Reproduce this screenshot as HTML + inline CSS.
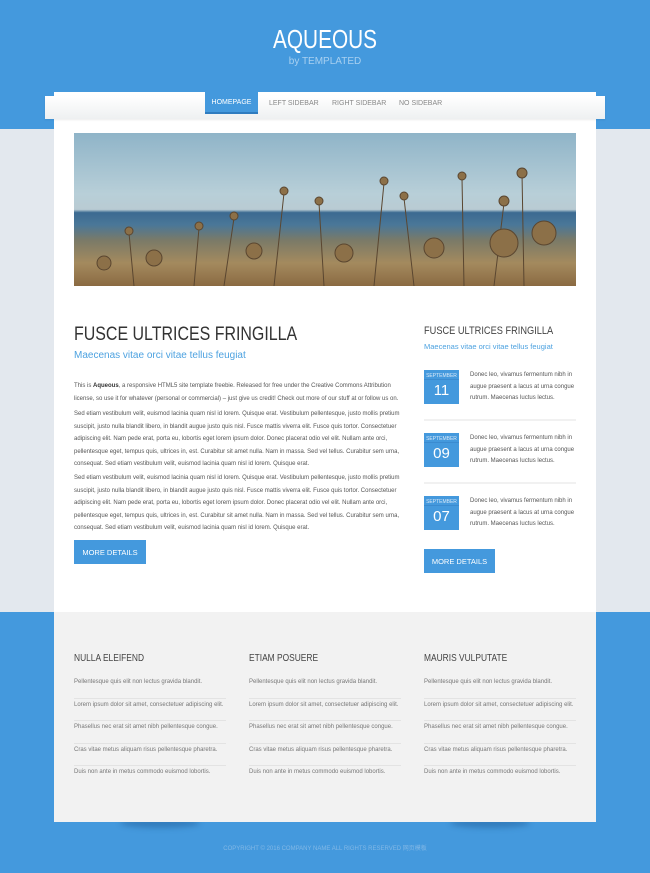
<!DOCTYPE html>
<html><head><style>
*{margin:0;padding:0;box-sizing:border-box}
body{width:650px;height:873px;background:#4499dd;font-family:"Liberation Sans",sans-serif;position:relative;overflow:hidden;color:#666}
.n{display:inline-block;transform:scaleX(.84);transform-origin:left center;white-space:nowrap}
.mid{position:absolute;left:0;top:129px;width:650px;height:483px;background:#e3e8ee}
.h1{position:absolute;top:24px;width:650px;text-align:center;color:#fff;font-size:26px}
.h1 span{display:inline-block;transform:scaleX(.8)}
.by{position:absolute;top:56px;width:650px;text-align:center;color:#a8d0f0;font-size:10px}
.box{position:absolute;left:54px;top:92px;width:542px;height:520px;background:#fff}
.nav{position:absolute;left:45px;top:96px;width:560px;height:23px;background:linear-gradient(#fff,#eef0f1);box-shadow:0 1px 2px rgba(0,0,0,.08)}
.nav a{position:absolute;top:4px;font-size:7px;color:#888}
.tab{position:absolute;left:205px;top:92px;width:53px;height:22px;background:#4499dd;border-bottom:2px solid #2f7cbf;color:#fff;font-size:7px;text-align:center;padding-top:7px}
.img{position:absolute;left:74px;top:133px;width:502px;height:153px;background:linear-gradient(#8fb4c8 0%,#b8cfd8 40%,#b9cbd3 50%,#3c6a91 52%,#4a7798 60%,#7a7a68 70%,#a48a5e 85%,#8a6a42 100%);overflow:hidden}
.t1{position:absolute;left:74px;top:324px;font-size:19px;color:#333}
.s1{position:absolute;left:74px;top:350px;font-size:10px;color:#4da2e0}
p.b{position:absolute;left:74px;width:330px;font-size:6px;line-height:12.5px;color:#555}
.btn{position:absolute;background:#4499dd;color:#fff;font-size:7.5px;text-align:center;padding-top:8px;height:24px;width:72px}
.t2{position:absolute;left:424px;top:325px;font-size:11px;color:#444}
.s2{position:absolute;left:424px;top:342px;font-size:7.5px;color:#4da2e0}
.date{position:absolute;left:424px;width:35px;height:34px;background:#4499dd;color:#fff;text-align:center}
.date .m{font-size:5px;padding-top:3px;color:#dbeaf8;border-bottom:1px solid #3b8bd0;height:10px}
.date .d{font-size:15px;padding-top:2px}
.dt{position:absolute;left:470px;width:110px;font-size:6px;line-height:11.5px;color:#555}
.sep{position:absolute;left:424px;width:152px;height:2px;background:#f1f1f1}
.foot{position:absolute;left:54px;top:612px;width:542px;height:210px;background:#f2f2f2}
.sh{position:absolute;top:818px;height:10px;border-radius:50%;background:rgba(0,40,90,.25);filter:blur(3px)}
.col{position:absolute;top:653px;width:152px}
.col h4{font-weight:normal;font-size:10px;color:#444;margin-bottom:12px}
.col div{font-size:6px;color:#777;height:22.5px;padding-top:3px;border-bottom:1px solid #e3e3e3}
.col div:last-child{border:none}
.copy{position:absolute;top:843px;width:650px;text-align:center;font-size:6px;color:#82b8e6}
</style></head><body>
<div class="mid"></div>
<div class="h1"><span>AQUEOUS</span></div>
<div class="by">by TEMPLATED</div>
<div class="box"></div>
<div class="nav"><a style="left:224px">LEFT SIDEBAR</a><a style="left:287px">RIGHT SIDEBAR</a><a style="left:354px">NO SIDEBAR</a></div>
<div class="tab">HOMEPAGE</div>
<div class="img">
<svg width="502" height="153" style="position:absolute;left:0;top:0">
<g stroke="#5a4630" stroke-width="1" fill="#8c7048">
<line x1="200" y1="153" x2="210" y2="60"/><circle cx="210" cy="58" r="4"/>
<line x1="250" y1="153" x2="245" y2="70"/><circle cx="245" cy="68" r="4"/>
<line x1="300" y1="153" x2="310" y2="50"/><circle cx="310" cy="48" r="4"/>
<line x1="340" y1="153" x2="330" y2="65"/><circle cx="330" cy="63" r="4"/>
<line x1="390" y1="153" x2="388" y2="45"/><circle cx="388" cy="43" r="4"/>
<line x1="420" y1="153" x2="430" y2="70"/><circle cx="430" cy="68" r="5"/>
<line x1="450" y1="153" x2="448" y2="40"/><circle cx="448" cy="40" r="5"/>
<line x1="150" y1="153" x2="160" y2="85"/><circle cx="160" cy="83" r="4"/>
<line x1="120" y1="153" x2="125" y2="95"/><circle cx="125" cy="93" r="4"/>
<line x1="60" y1="153" x2="55" y2="100"/><circle cx="55" cy="98" r="4"/>
<circle cx="430" cy="110" r="14"/><circle cx="470" cy="100" r="12"/><circle cx="360" cy="115" r="10"/><circle cx="270" cy="120" r="9"/><circle cx="80" cy="125" r="8"/><circle cx="180" cy="118" r="8"/><circle cx="30" cy="130" r="7"/>
</g></svg></div>
<div class="t1"><span class="n">FUSCE ULTRICES FRINGILLA</span></div>
<div class="s1">Maecenas vitae orci vitae tellus feugiat</div>
<p class="b" style="top:380px">This is <b style="color:#333">Aqueous</b>, a responsive HTML5 site template freebie. Released for free under the Creative Commons Attribution license, so use it for whatever (personal or commercial) – just give us credit! Check out more of our stuff at or follow us on.</p>
<p class="b" style="top:408px">Sed etiam vestibulum velit, euismod lacinia quam nisl id lorem. Quisque erat. Vestibulum pellentesque, justo mollis pretium suscipit, justo nulla blandit libero, in blandit augue justo quis nisl. Fusce mattis viverra elit. Fusce quis tortor. Consectetuer adipiscing elit. Nam pede erat, porta eu, lobortis eget lorem ipsum dolor. Donec placerat odio vel elit. Nullam ante orci, pellentesque eget, tempus quis, ultrices in, est. Curabitur sit amet nulla. Nam in massa. Sed vel tellus. Curabitur sem urna, consequat. Sed etiam vestibulum velit, euismod lacinia quam nisl id lorem. Quisque erat.</p>
<p class="b" style="top:472px">Sed etiam vestibulum velit, euismod lacinia quam nisl id lorem. Quisque erat. Vestibulum pellentesque, justo mollis pretium suscipit, justo nulla blandit libero, in blandit augue justo quis nisl. Fusce mattis viverra elit. Fusce quis tortor. Consectetuer adipiscing elit. Nam pede erat, porta eu, lobortis eget lorem ipsum dolor. Donec placerat odio vel elit. Nullam ante orci, pellentesque eget, tempus quis, ultrices in, est. Curabitur sit amet nulla. Nam in massa. Sed vel tellus. Curabitur sem urna, consequat. Sed etiam vestibulum velit, euismod lacinia quam nisl id lorem. Quisque erat.</p>
<div class="btn" style="left:74px;top:540px">MORE DETAILS</div>
<div class="t2"><span class="n">FUSCE ULTRICES FRINGILLA</span></div>
<div class="s2">Maecenas vitae orci vitae tellus feugiat</div>
<div class="date" style="top:370px"><div class="m">SEPTEMBER</div><div class="d">11</div></div>
<div class="dt" style="top:370px">Donec leo, vivamus fermentum nibh in augue praesent a lacus at urna congue rutrum. Maecenas luctus lectus.</div>
<div class="sep" style="top:419px"></div>
<div class="date" style="top:433px"><div class="m">SEPTEMBER</div><div class="d">09</div></div>
<div class="dt" style="top:433px">Donec leo, vivamus fermentum nibh in augue praesent a lacus at urna congue rutrum. Maecenas luctus lectus.</div>
<div class="sep" style="top:482px"></div>
<div class="date" style="top:496px"><div class="m">SEPTEMBER</div><div class="d">07</div></div>
<div class="dt" style="top:496px">Donec leo, vivamus fermentum nibh in augue praesent a lacus at urna congue rutrum. Maecenas luctus lectus.</div>
<div class="btn" style="left:424px;top:549px;width:71px">MORE DETAILS</div>
<div class="sh" style="left:120px;width:80px"></div><div class="sh" style="left:450px;width:80px"></div>
<div class="foot"></div>
<div class="col" style="left:74px"><h4><span class="n">NULLA ELEIFEND</span></h4><div>Pellentesque quis elit non lectus gravida blandit.</div><div>Lorem ipsum dolor sit amet, consectetuer adipiscing elit.</div><div>Phasellus nec erat sit amet nibh pellentesque congue.</div><div>Cras vitae metus aliquam risus pellentesque pharetra.</div><div>Duis non ante in metus commodo euismod lobortis.</div></div>
<div class="col" style="left:249px"><h4><span class="n">ETIAM POSUERE</span></h4><div>Pellentesque quis elit non lectus gravida blandit.</div><div>Lorem ipsum dolor sit amet, consectetuer adipiscing elit.</div><div>Phasellus nec erat sit amet nibh pellentesque congue.</div><div>Cras vitae metus aliquam risus pellentesque pharetra.</div><div>Duis non ante in metus commodo euismod lobortis.</div></div>
<div class="col" style="left:424px"><h4><span class="n">MAURIS VULPUTATE</span></h4><div>Pellentesque quis elit non lectus gravida blandit.</div><div>Lorem ipsum dolor sit amet, consectetuer adipiscing elit.</div><div>Phasellus nec erat sit amet nibh pellentesque congue.</div><div>Cras vitae metus aliquam risus pellentesque pharetra.</div><div>Duis non ante in metus commodo euismod lobortis.</div></div>
<div class="copy">COPYRIGHT © 2016 COMPANY NAME ALL RIGHTS RESERVED 网页模板</div>
</body></html>
